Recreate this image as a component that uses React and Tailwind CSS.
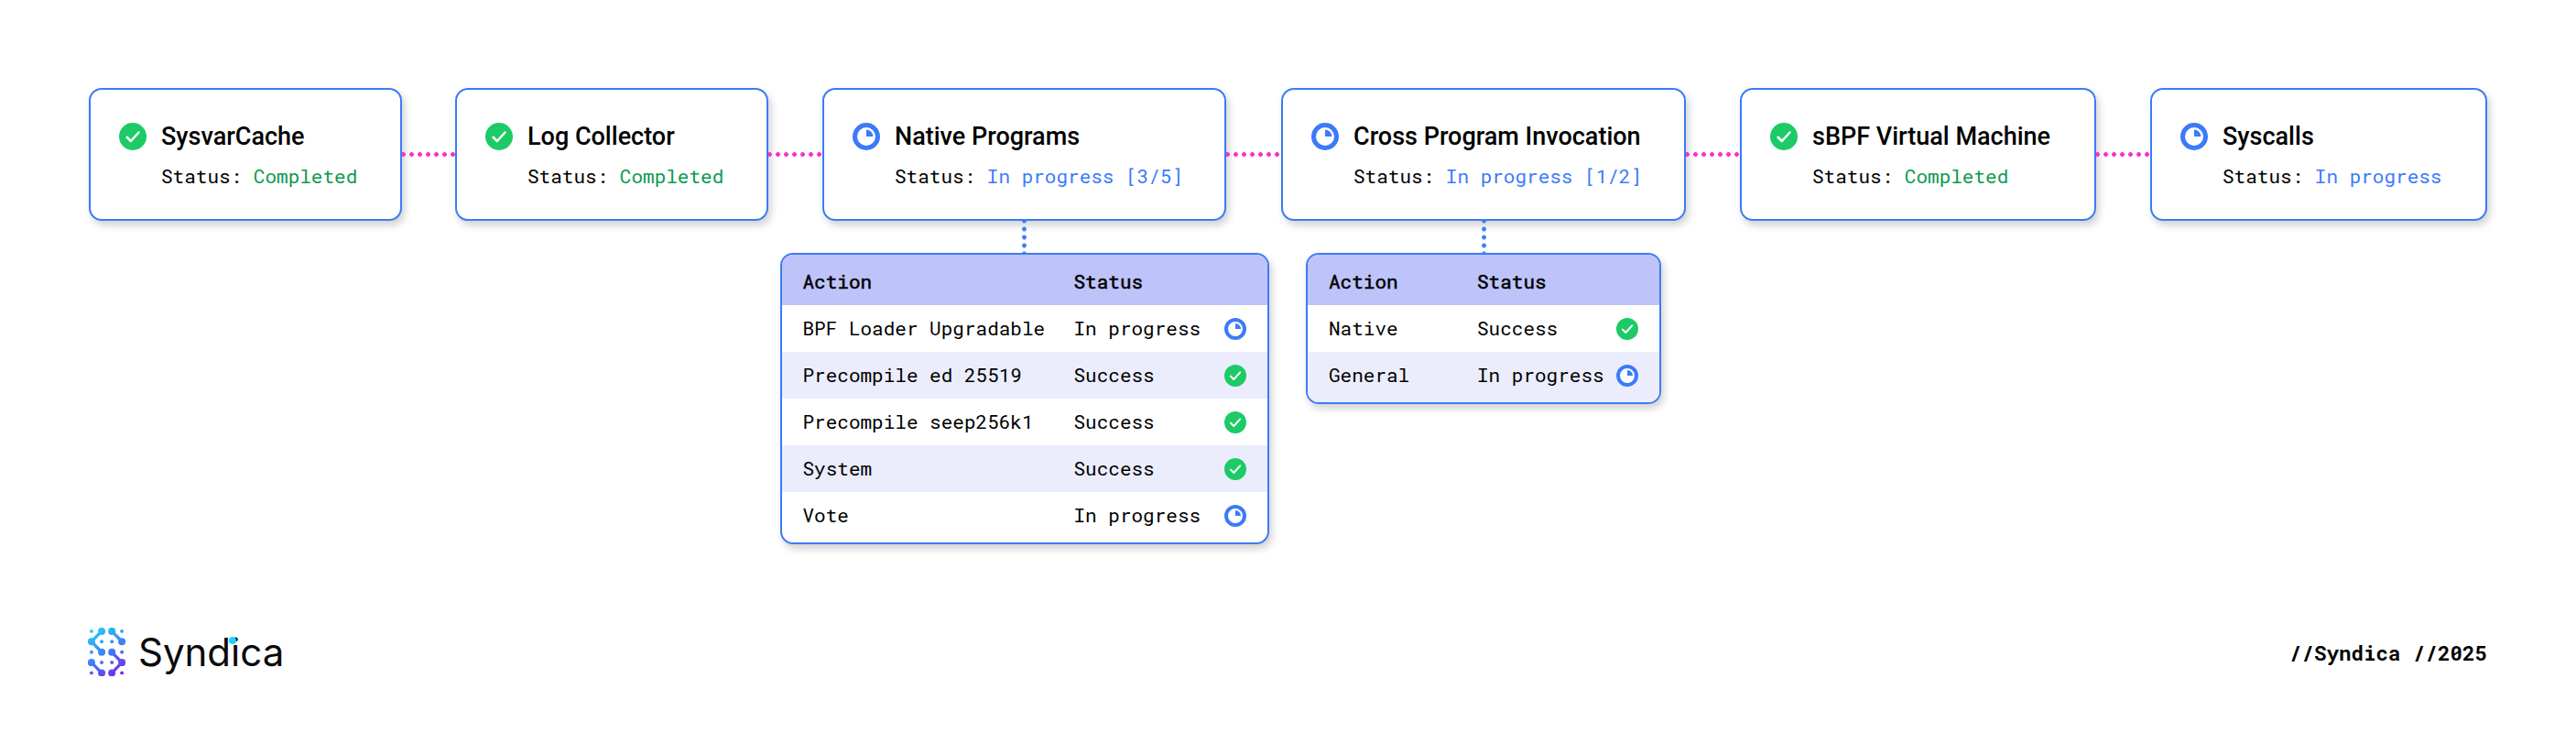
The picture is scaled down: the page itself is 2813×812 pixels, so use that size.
import React from "react";

const monoFont = "font-['Roboto_Mono','DejaVu_Sans_Mono',monospace]";

const CheckIcon = ({ className }) => (
	<svg viewBox="0 0 24 24" className={className}>
		<circle cx="12" cy="12" r="12" fill="#1ccb66" />
		<path
			d="M6.9 12.6l3.4 3.4 6.9-7.6"
			fill="none"
			stroke="#fff"
			strokeWidth="2"
			strokeLinecap="round"
			strokeLinejoin="round"
		/>
	</svg>
);

const ProgressIcon = ({ className }) => (
	<svg viewBox="0 0 24 24" className={className}>
		<circle cx="12" cy="12" r="10" fill="#fff" stroke="#3b7bf8" strokeWidth="4" />
		<path d="M12 12V6a6 6 0 0 1 6 6z" fill="#3b7bf8" />
	</svg>
);

const SyndicaLogo = () => {
	const small = [
		[4, 4],
		[38, 4],
		[15.4, 15.6],
		[26.8, 15.6],
		[4, 27.4],
		[38, 27.4],
		[15.4, 39],
		[26.8, 39],
		[4, 50.6],
		[38, 50.6],
	];
	const arms = [
		"M15.4 4 4 15.6 15.4 27.4",
		"M26.8 4 38 15.6",
		"M26.8 27.4 38 39 26.8 50.6",
		"M4 39 15.4 50.6",
	];
	return (
		<svg viewBox="0 0 42 55" className="w-[41px] h-[53.7px] shrink-0">
			<defs>
				<linearGradient id="logoFill" gradientUnits="userSpaceOnUse" x1="4" y1="2" x2="36" y2="54">
					<stop offset="0" stopColor="#1fd0f7" />
					<stop offset="0.5" stopColor="#3c82f6" />
					<stop offset="1" stopColor="#7a25e8" />
				</linearGradient>
			</defs>
			{arms.map((d) => (
				<path key={d} d={d} fill="none" stroke="url(#logoFill)" strokeWidth="3.4" strokeLinejoin="round" />
			))}
			{arms
				.flatMap((d) => d.slice(1).split(" ").reduce((acc, v, i, all) => (i % 2 ? acc : [...acc, [+all[i], +all[i + 1]]]), []))
				.map(([x, y]) => (
					<circle key={`${x}-${y}`} cx={x} cy={y} r="4.1" fill="url(#logoFill)" />
				))}
			{small.map(([x, y]) => (
				<circle key={`s${x}-${y}`} cx={x} cy={y} r="2" fill="url(#logoFill)" />
			))}
		</svg>
	);
};

const HConnector = ({ className }) => (
	<div
		className={`shrink-0 mt-[70px] h-[5px] bg-[radial-gradient(circle,#ff2fc6_2.1px,transparent_2.6px)] bg-[length:9px_5px] bg-[position:-3px_0] ${className}`}
	/>
);

const StageCard = ({ title, done, status, className }) => (
	<div
		className={`h-[145px] pt-[3px] shrink-0 flex flex-col justify-center pl-[31px] bg-white border-2 border-[#3b7bf8] rounded-[14px] shadow-[3px_5px_8px_rgba(0,0,0,0.18)] ${className}`}
	>
		<div className="flex items-center gap-[16px] h-[32px]">
			{done ? <CheckIcon className="w-[30px] h-[30px] shrink-0" /> : <ProgressIcon className="w-[30px] h-[30px] shrink-0" />}
			<span className="font-['Roboto',sans-serif] font-medium text-[27px] text-black whitespace-nowrap">{title}</span>
		</div>
		<div className={`pl-[46px] mt-[12px] text-[21px] leading-[30px] whitespace-nowrap text-black ${monoFont}`}>
			Status:{" "}
			<span className={done ? "text-[#0a9a4e]" : "text-[#3b7bf8]"}>{status}</span>
		</div>
	</div>
);

const ActionTable = ({ rows, className, colClass }) => (
	<div
		className={`shrink-0 overflow-hidden bg-white border-2 border-[#3b7bf8] rounded-[14px] shadow-[3px_5px_8px_rgba(0,0,0,0.18)] text-[21px] text-black ${monoFont} ${className}`}
	>
		<div className="flex items-center h-[55px] pt-[4px] pl-[23px] bg-[#bec3f9] [-webkit-text-stroke:0.5px_black]">
			<div className={colClass}>Action</div>
			<div>Status</div>
		</div>
		{rows.map((row) => (
			<div key={row.name} className="flex items-center h-[51px] last:h-[55px] last:pb-[4px] pl-[23px] pr-[23px] odd:bg-[#ebedfc]">
				<div className={`${colClass} whitespace-nowrap`}>{row.name}</div>
				<div className="whitespace-nowrap">{row.done ? "Success" : "In progress"}</div>
				{row.done ? (
					<CheckIcon className="w-[24px] h-[24px] ml-auto shrink-0" />
				) : (
					<ProgressIcon className="w-[24px] h-[24px] ml-auto shrink-0" />
				)}
			</div>
		))}
	</div>
);

const VConnector = () => (
	<div className="shrink-0 w-[5px] h-[35px] bg-[radial-gradient(circle,#3b7bf8_2.1px,transparent_2.6px)] bg-[length:5px_9px] bg-[position:0_4.5px]" />
);

const App = () => {
	return (
		<div className="min-h-[812px] w-[2813px] flex flex-col pt-[96px] px-[97px] pb-[73px] bg-white">
			<div className="flex items-start">
				<StageCard title="SysvarCache" done status="Completed" className="w-[342px]" />
				<HConnector className="w-[58px]" />
				<StageCard title="Log Collector" done status="Completed" className="w-[342px]" />
				<HConnector className="w-[59px]" />
				<div className="flex flex-col items-center shrink-0 w-[441px]">
					<StageCard title="Native Programs" status="In progress [3/5]" className="w-[441px]" />
					<VConnector />
					<ActionTable
						className="w-[534px]"
						colClass="w-[296px] shrink-0"
						rows={[
							{ name: "BPF Loader Upgradable" },
							{ name: "Precompile ed 25519", done: true },
							{ name: "Precompile seep256k1", done: true },
							{ name: "System", done: true },
							{ name: "Vote" },
						]}
					/>
				</div>
				<HConnector className="w-[60px]" />
				<div className="flex flex-col items-center shrink-0 w-[442px]">
					<StageCard title="Cross Program Invocation" status="In progress [1/2]" className="w-[442px]" />
					<VConnector />
					<ActionTable
						className="w-[388px]"
						colClass="w-[162px] shrink-0"
						rows={[
							{ name: "Native", done: true },
							{ name: "General" },
						]}
					/>
				</div>
				<HConnector className="w-[59px]" />
				<StageCard title="sBPF Virtual Machine" done status="Completed" className="w-[389px]" />
				<HConnector className="w-[59px]" />
				<StageCard title="Syscalls" status="In progress" className="w-[368px]" />
			</div>

			<div className="mt-auto flex items-center justify-between">
				<div className="flex items-center gap-[14px] -ml-[1px]">
					<SyndicaLogo />
					<div className="relative font-['Inter',sans-serif] text-[42px] leading-[55px] text-[#0a0a0a]">
						Syndica
						<span className="absolute left-[99px] top-[11px] w-[8px] h-[8px] rounded-full bg-[#1fd0f7]" />
					</div>
				</div>
				<div className={`pt-[3px] font-bold text-[22.5px] text-black ${monoFont}`}>//Syndica //2025</div>
			</div>
		</div>
	);
};

export default App;
